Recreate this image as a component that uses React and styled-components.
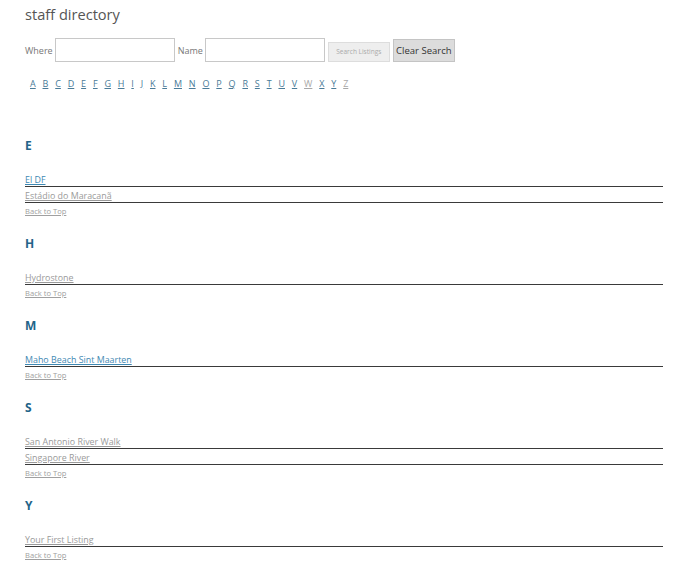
import React from 'react';
import styled, { createGlobalStyle } from 'styled-components';

const GlobalStyle = createGlobalStyle`
  body {
    margin: 0;
    background: #ffffff;
    font-family: "Open Sans", "Liberation Sans", sans-serif;
  }
`;

const Page = styled.div`
  padding: 5px 29px 20px 25px;
`;

const Title = styled.h1`
  margin: 0;
  font-size: 14.6px;
  line-height: 19px;
  font-weight: 400;
  color: #555555;
`;

const SearchForm = styled.form`
  display: flex;
  align-items: center;
  margin-top: 14px;
  height: 24px;
`;

const Label = styled.label`
  font-size: 9px;
  color: #777777;
  margin-right: 2px;
`;

const TextInput = styled.input`
  box-sizing: border-box;
  width: 120px;
  height: 24px;
  border: 1px solid #c8c8c8;
  margin: 0 3px 0 0;
  padding: 0 4px;
`;

const Button = styled.button`
  box-sizing: border-box;
  width: 62px;
  height: ${(p) => (p.$primary ? '23px' : '20px')};
  margin: ${(p) => (p.$primary ? '0 0 0 3px' : '3px 0 0 0')};
  padding: 0;
  font-family: "Open Sans", "Liberation Sans", sans-serif;
  font-size: ${(p) => (p.$primary ? '9.5px' : '6.5px')};
  color: ${(p) => (p.$primary ? '#333333' : '#aaaaaa')};
  background: ${(p) => (p.$primary ? '#dcdcdc' : '#eeeeee')};
  border: 1px solid ${(p) => (p.$primary ? '#c4c4c4' : '#dddddd')};
  border-radius: 0;
`;

const Alphabet = styled.div`
  display: flex;
  gap: 6.85px;
  margin-top: 15px;
  padding-left: 5px;
  line-height: 14px;
`;

const Letter = styled.a`
  font-size: 9px;
  color: ${(p) => (p.$dim ? '#a8a8a8' : '#4a7b98')};
  text-decoration: underline;
`;

const Section = styled.section`
  padding-top: ${(p) => (p.$first ? '30px' : '0')};
`;

const Heading = styled.h3`
  margin: 18px 0;
  font-size: 12px;
  line-height: 14px;
  font-weight: 700;
  color: #236488;
`;

const List = styled.ul`
  list-style: none;
  margin: 0;
  padding: 0;
`;

const Item = styled.li`
  height: 15px;
  line-height: 12px;
  border-bottom: 1px solid #3a3a3a;
`;

const ItemLink = styled.a`
  font-size: 8.9px;
  color: ${(p) => (p.$active ? '#3f89b3' : '#9a9a9a')};
  text-decoration: underline;
`;

const BackToTop = styled.a`
  display: block;
  line-height: 16px;
  font-size: 7.6px;
  color: #a0a0a0;
  text-decoration: underline;
`;

const letters = 'ABCDEFGHIJKLMNOPQRSTUVWXYZ'.split('');

const sections = [
  { key: 'E', items: [{ name: 'El DF', active: true }, { name: 'Estádio do Maracanã' }] },
  { key: 'H', items: [{ name: 'Hydrostone' }] },
  { key: 'M', items: [{ name: 'Maho Beach Sint Maarten', active: true }] },
  { key: 'S', items: [{ name: 'San Antonio River Walk' }, { name: 'Singapore River' }] },
  { key: 'Y', items: [{ name: 'Your First Listing' }] },
];

export default function App() {
  return (
    <>
      <GlobalStyle />
      <Page>
        <Title>staff directory</Title>
        <SearchForm onSubmit={(e) => e.preventDefault()}>
          <Label>Where</Label>
          <TextInput type="text" />
          <Label>Name</Label>
          <TextInput type="text" />
          <Button type="submit">Search Listings</Button>
          <Button type="button" $primary>Clear Search</Button>
        </SearchForm>
        <Alphabet>
          {letters.map((l) => (
            <Letter key={l} href="#" $dim={l === 'W' || l === 'Z'}>{l}</Letter>
          ))}
        </Alphabet>
        {sections.map((s, i) => (
          <Section key={s.key} $first={i === 0}>
            <Heading>{s.key}</Heading>
            <List>
              {s.items.map((it) => (
                <Item key={it.name}>
                  <ItemLink href="#" $active={it.active}>{it.name}</ItemLink>
                </Item>
              ))}
            </List>
            <BackToTop href="#">Back to Top</BackToTop>
          </Section>
        ))}
      </Page>
    </>
  );
}
